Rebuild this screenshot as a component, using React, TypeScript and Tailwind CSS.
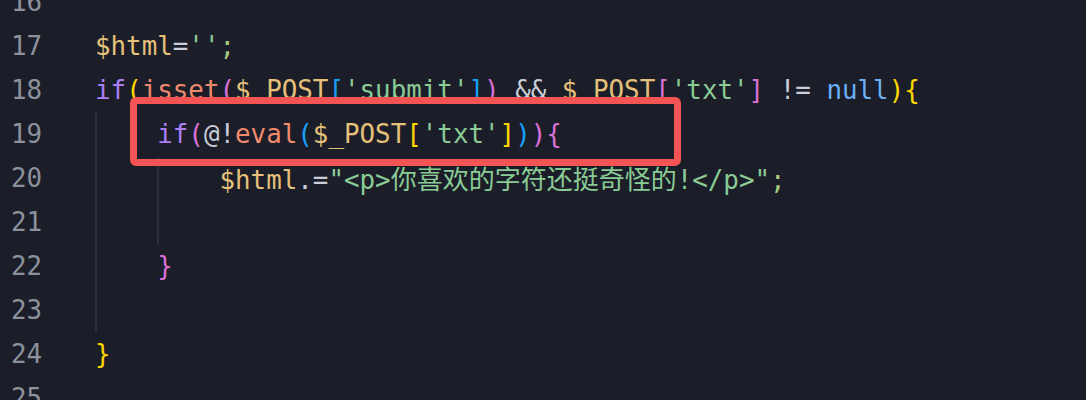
import React from "react";

const C = {
  kw: "text-[#a97ff5]",
  fn: "text-[#ef8a6d]",
  v: "text-[#e5c07b]",
  s: "text-[#8acb95]",
  op: "text-[#c9ced8]",
  nul: "text-[#6aaff5]",
  semi: "text-[#a9c87f]",
  y: "text-[#ffd700]",
  m: "text-[#da70d6]",
  b: "text-[#179fff]",
  hid: "text-transparent",
};

type Tok = [string, string];

const Indent = ({ guide = true }: { guide?: boolean }) => (
  <span
    className={
      "self-stretch inline-block w-[4ch] shrink-0 " +
      (guide ? "border-l-2 border-[#2a2f3b]" : "")
    }
  />
);

const Code = ({ toks }: { toks: Tok[] }) => (
  <span className="whitespace-pre">
    {toks.map(([c, t], i) => (
      <span key={i} className={c}>
        {t}
      </span>
    ))}
  </span>
);

const Row = ({
  n,
  indent = 0,
  toks = [],
}: {
  n: number;
  indent?: number;
  toks?: Tok[];
}) => (
  <div className="flex h-[44px] items-center">
    <div className="w-[42px] shrink-0 text-right text-[#8c919c]">{n}</div>
    <div className="ml-[53px] flex h-full items-center">
      {Array.from({ length: indent }).map((_, i) => (
        <Indent key={i} />
      ))}
      <Code toks={toks} />
    </div>
  </div>
);

export default function App() {
  return (
    <div
      className="relative h-[400px] w-[1086px] overflow-hidden bg-[#1b1e28] text-[25.85px] leading-none"
      style={{ fontFamily: '"DejaVu Sans Mono", "Liberation Mono", monospace' }}
    >
      <div className="-mt-[19px] flex flex-col">
        <Row n={16} />
        <Row
          n={17}
          toks={[
            [C.v, "$html"],
            [C.op, "="],
            [C.s, "''"],
            [C.semi, ";"],
          ]}
        />
        <Row
          n={18}
          toks={[
            [C.kw, "if"],
            [C.y, "("],
            [C.fn, "isset"],
            [C.m, "("],
            [C.v, "$"],
            [C.hid, "_"],
            [C.v, "POST"],
            [C.b, "["],
            [C.s, "'submit'"],
            [C.b, "]"],
            [C.m, ")"],
            [C.op, " && "],
            [C.v, "$"],
            [C.hid, "_"],
            [C.v, "POST"],
            [C.m, "["],
            [C.s, "'txt'"],
            [C.m, "]"],
            [C.op, " != "],
            [C.nul, "null"],
            [C.y, ")"],
            [C.y, "{"],
          ]}
        />
        <Row
          n={19}
          indent={1}
          toks={[
            [C.kw, "if"],
            [C.m, "("],
            [C.op, "@!"],
            [C.fn, "eval"],
            [C.b, "("],
            [C.v, "$_POST"],
            [C.y, "["],
            [C.s, "'txt'"],
            [C.y, "]"],
            [C.b, ")"],
            [C.m, ")"],
            [C.m, "{"],
          ]}
        />
        <div className="flex h-[44px] items-center">
          <div className="w-[42px] shrink-0 text-right text-[#8c919c]">20</div>
          <div className="ml-[53px] flex h-full items-center">
            <Indent />
            <Indent />
            <span className="whitespace-pre">
              <span className={C.v}>$html</span>
              <span className={C.op}>.=</span>
              <span className={C.s}>"&lt;p&gt;</span>
              <span
                className={C.s + " text-[26px]"}
                style={{ fontFamily: '"Noto Sans CJK SC", sans-serif' }}
              >
                你喜欢的字符还挺奇怪的
              </span>
              <span className={C.s}>!&lt;/p&gt;"</span>
              <span className={C.semi}>;</span>
            </span>
          </div>
        </div>
        <Row n={21} indent={2} />
        <Row n={22} indent={1} toks={[[C.m, "}"]]} />
        <Row n={23} indent={1} />
        <Row n={24} toks={[[C.y, "}"]]} />
        <Row n={25} />
      </div>
      <div className="absolute left-[130px] top-[97px] h-[69px] w-[551px] rounded-[6px] border-[7px] border-[#f45454]" />
    </div>
  );
}
